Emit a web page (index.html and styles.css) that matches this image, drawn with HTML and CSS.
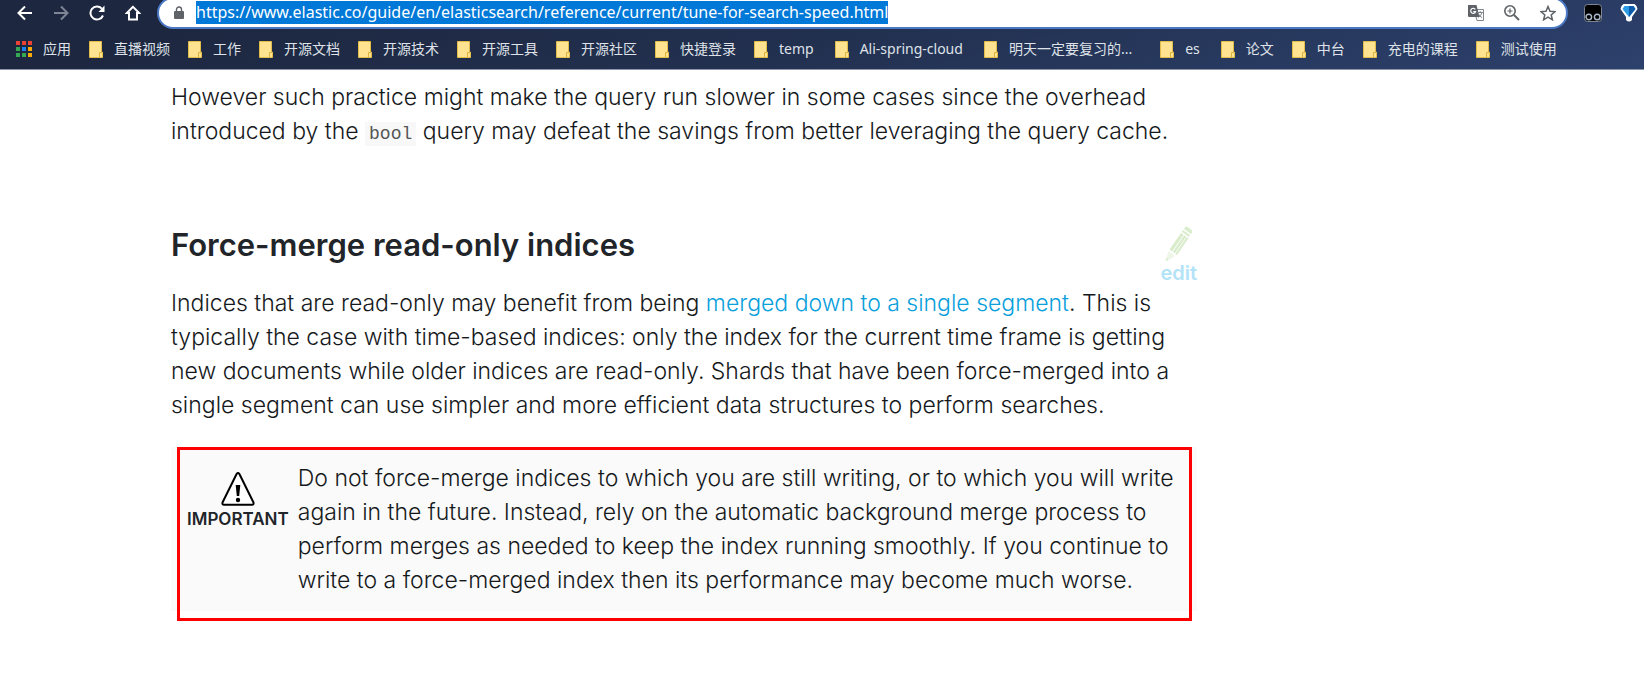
FILE: index.html
```html
<!DOCTYPE html>
<html lang="en">
<head>
    <meta charset="UTF-8">
    <meta name="viewport" content="width=device-width, initial-scale=1.0">
    <title>Tune for search speed | Elasticsearch Guide</title>
    <link rel="stylesheet" href="styles.css">
</head>
<body>
    <svg class="symbols" aria-hidden="true">
        <symbol id="folder" viewBox="0 0 14 17">
            <path d="M.5.5h12v10.500h1v5.500H.5z" fill="#ffe391" stroke="#e3bd4a"/>
            <path d="M10.500 16v-4.500h2.500" fill="none" stroke="#dcb23c"/>
        </symbol>
    </svg>
    <header class="browser">
        <div class="toolbar">
            <nav class="nav-buttons">
                <button type="button" aria-label="Back"><svg width="16" height="16" viewBox="0 0 16 16"><path d="M15 8H2M8 1.500L1.500 8 8 14.500" fill="none" stroke="#fff" stroke-width="2"/></svg></button>
                <button type="button" aria-label="Forward"><svg width="16" height="16" viewBox="0 0 16 16"><path d="M1 8h13M8 1.500L14.500 8 8 14.500" fill="none" stroke="#7e8594" stroke-width="2"/></svg></button>
                <button type="button" aria-label="Reload"><svg width="16" height="16" viewBox="0 0 16 16"><path d="M14 10.500A6.500 6.500 0 1 1 12.800 3.600" fill="none" stroke="#fff" stroke-width="2"/><path d="M15.500.5V7H9.500z" fill="#fff"/></svg></button>
                <button type="button" aria-label="Home"><svg width="16" height="16" viewBox="0 0 16 16"><path d="M8 1.800L1.800 8H4v6.500h8V8h2.200z" fill="none" stroke="#fff" stroke-width="2"/></svg></button>
            </nav>
            <div class="address-bar">
                <svg class="lock" width="10" height="14" viewBox="0 0 10 14"><rect y="5" width="10" height="8" rx="1" fill="#5f6368"/><path d="M2.500 5.500V3.500a2.500 2.500 0 0 1 5 0v2" fill="none" stroke="#5f6368" stroke-width="1.400"/></svg>
                <input class="url" type="text" aria-label="Address" value="https://www.elastic.co/guide/en/elasticsearch/reference/current/tune-for-search-speed.html">
                <div class="page-actions">
                    <button type="button" aria-label="Translate"><svg width="16" height="16" viewBox="0 0 16 16"><path d="M6 4.500h9.500v11H9z" fill="#fff" stroke="#80868b"/><path d="M0 0h8.500l3 12H1.200Q0 12 0 10.800z" fill="#5f6368"/><path d="M7.300 4.400A2.500 2.500 0 1 0 7.600 6.500H5.300" fill="none" stroke="#fff" stroke-width="1.200"/><path d="M9.500 7.500H15M12.200 6v1.500M14 7.500q-.8 3-3.500 5M10.500 9q1 2.500 3.500 3.500" fill="none" stroke="#80868b"/></svg></button>
                    <button type="button" aria-label="Zoom"><svg width="16" height="16" viewBox="0 0 16 16"><circle cx="6" cy="6" r="5.200" fill="none" stroke="#5f6368" stroke-width="1.600"/><path d="M10 10l5 5" stroke="#5f6368" stroke-width="2"/><path d="M3.500 6h5M6 3.500v5" stroke="#5f6368" stroke-width="1.200"/></svg></button>
                    <button type="button" aria-label="Bookmark this page"><svg width="16" height="16" viewBox="0 0 16 16"><path d="M8 1.500l2 4.700 5 .4-3.800 3.300 1.200 4.900L8 12.200l-4.400 2.600 1.200-4.900L1 6.600l5-.4z" fill="none" stroke="#5f6368" stroke-width="1.500"/></svg></button>
                </div>
            </div>
            <div class="extensions">
                <button type="button" aria-label="Tampermonkey"><svg width="18" height="18" viewBox="0 0 18 18"><rect x=".5" y=".5" width="17" height="17" rx="3" fill="#000" stroke="#7d8493"/><g fill="#000" stroke="#a9b6c9" stroke-width="1.400"><circle cx="4.800" cy="13" r="2.800"/><circle cx="13.200" cy="13" r="2.800"/></g></svg></button>
                <button type="button" aria-label="Proxy"><svg width="18" height="18" viewBox="0 0 18 18"><path d="M3.500 0h11q3 2 3 5L12 13v3q-3 3-6 0v-3L.5 5q0-3 3-5z" fill="#fff"/><path d="M4.500 2h9L15.500 5 9 13 2.500 5z" fill="#2b9be8"/><path d="M9 2h4.500l2 3L9 13z" fill="#0d5cab"/></svg></button>
            </div>
        </div>
        <nav class="bookmarks">
            <a class="apps" href="#"><svg width="16" height="16" viewBox="0 0 16 16"><path d="M0 0h4v4H0zM6 0h4v4H6zM12 0h4v4h-4z" fill="#ea4335"/><path d="M0 6h4v4H0zM0 12h4v4H0zM6 12h4v4H6z" fill="#34a853"/><path d="M6 6h4v4H6z" fill="#1a83f0"/><path d="M12 6h4v4h-4zM12 12h4v4h-4z" fill="#fbab05"/></svg><span>应用</span></a>
            <a href="#"><svg class="folder"><use href="#folder"/></svg><span>直播视频</span></a>
            <a href="#"><svg class="folder"><use href="#folder"/></svg><span>工作</span></a>
            <a href="#"><svg class="folder"><use href="#folder"/></svg><span>开源文档</span></a>
            <a href="#"><svg class="folder"><use href="#folder"/></svg><span>开源技术</span></a>
            <a href="#"><svg class="folder"><use href="#folder"/></svg><span>开源工具</span></a>
            <a href="#"><svg class="folder"><use href="#folder"/></svg><span>开源社区</span></a>
            <a href="#"><svg class="folder"><use href="#folder"/></svg><span>快捷登录</span></a>
            <a class="latin" href="#"><svg class="folder"><use href="#folder"/></svg><span>temp</span></a>
            <a class="latin" href="#"><svg class="folder"><use href="#folder"/></svg><span>Ali-spring-cloud</span></a>
            <a class="long" href="#"><svg class="folder"><use href="#folder"/></svg><span>明天一定要复习的...</span></a>
            <a class="latin" href="#"><svg class="folder"><use href="#folder"/></svg><span>es</span></a>
            <a href="#"><svg class="folder"><use href="#folder"/></svg><span>论文</span></a>
            <a href="#"><svg class="folder"><use href="#folder"/></svg><span>中台</span></a>
            <a href="#"><svg class="folder"><use href="#folder"/></svg><span>充电的课程</span></a>
            <a href="#"><svg class="folder"><use href="#folder"/></svg><span>测试使用</span></a>
        </nav>
    </header>

    <main class="guide">
        <p>However such practice might make the query run slower in some cases since the overhead introduced by the <code>bool</code> query may defeat the savings from better leveraging the query cache.</p>

        <div class="section-title">
            <h2>Force-merge read-only indices</h2>
            <a class="edit" href="#">
                <svg width="28" height="36" viewBox="0 0 28 36"><g fill="#d9eccb"><path d="M20 1.500q1-1.500 2.500-.5l4 3q1.500 1 .5 2.500l-1 1.500-7-5z"/><path d="M18 4l7 5-1.200 1.700-7-5z"/><path d="M16 7l2.600 1.800L7 25.400l-2.500-1.900zM19.200 9.200l2 1.500L9.800 27.200l-2-1.500zM21.800 11.100l1.700 1.200L12 29l-1.700-1.300z"/><path d="M3.500 25L10 30l-8 5q-1.500.5-1-1z" fill="#eef6e8"/><path d="M1.500 31.500l2 2-3 1.500z"/></g></svg>
                <span>edit</span>
            </a>
        </div>

        <p>Indices that are read-only may benefit from being <a href="#">merged down to a single segment</a>. This is typically the case with time-based indices: only the index for the current time frame is getting new documents while older indices are read-only. Shards that have been force-merged into a single segment can use simpler and more efficient data structures to perform searches.</p>

        <div class="important">
            <div class="icon">
                <svg width="34" height="34" viewBox="0 0 34 34"><path d="M15.600 2Q17 .2 18.400 2L32.500 30.500Q33 32.800 31 32.800H3Q1 32.800 1.500 30.500z" fill="#fff" stroke="#000" stroke-width="2" stroke-linejoin="round"/><path d="M14.700 13h4.600l-1.100 11h-2.400z"/><circle cx="17" cy="28" r="2.200"/></svg>
                <strong>IMPORTANT</strong>
            </div>
            <p>Do not force-merge indices to which you are still writing, or to which you will write again in the future. Instead, rely on the automatic background merge process to perform merges as needed to keep the index running smoothly. If you continue to write to a force-merged index then its performance may become much worse.</p>
        </div>
    </main>
</body>
</html>
```
FILE: styles.css
```css
body {
    margin: 0;
    background: #fff;
    color: #16191c;
    font-family: Inter, sans-serif;
    font-size: 23px;
    font-weight: 300;
    line-height: 34px;
}
a {
    color: #0aa0dc;
    text-decoration: none;
}
button {
    display: flex;
    padding: 0;
    border: 0;
    background: none;
}
svg {
    flex: none;
}
.symbols {
    position: absolute;
    width: 0;
    height: 0;
}

/* browser bar */
.browser {
    height: 69px;
    overflow: hidden;
    background: linear-gradient(165deg, #1d2740 15%, #22304f 50%, #2d416d);
    border-bottom: 1px solid #8d96aa;
    font-weight: 400;
}
.toolbar {
    display: flex;
    align-items: center;
    height: 25px;
}
.nav-buttons {
    display: flex;
    gap: 20px;
    padding: 0 16px 0 17px;
}
.address-bar {
    display: flex;
    flex: 1;
    align-items: center;
    box-sizing: border-box;
    height: 32px;
    padding: 0 10px 0 15px;
    background: #fff;
    border: 2px solid #4a78c4;
    border-radius: 16px;
}
.url {
    field-sizing: content;
    margin-left: 12px;
    padding: 0;
    border: 0;
    background: #0078d7;
    color: #fff;
    font-family: "Noto Sans", sans-serif;
    font-size: 16px;
    line-height: 23px;
}
.page-actions {
    display: flex;
    gap: 20px;
    margin-left: auto;
}
.extensions {
    display: flex;
    gap: 18px;
    padding: 0 6px 0 16px;
}
.bookmarks {
    display: flex;
    gap: 18px;
    padding: 12px 16px 0;
}
.bookmarks a {
    display: flex;
    align-items: center;
    gap: 11px;
    color: #dfe2e8;
    font-family: "Noto Sans", "Noto Sans CJK SC", sans-serif;
    font-size: 14px;
    line-height: 24px;
    white-space: nowrap;
}
.bookmarks .latin {
    padding-right: 3px;
}
.bookmarks .long {
    padding-right: 10px;
}
.folder {
    width: 14px;
    height: 17px;
}

/* guide page */
.guide {
    max-width: 1026px;
    margin: 0 171px;
    padding: 10px 0 60px;
}
.guide p {
    margin: 0;
}
code {
    padding: 2px 4px;
    background: #f8f8f8;
    color: #555;
    font-family: "Liberation Mono", monospace;
    font-size: 18px;
    line-height: 20px;
}
.section-title {
    display: flex;
    justify-content: space-between;
    margin: 78px 0 2px;
}
h2 {
    margin: 0;
    color: #212529;
    font-size: 31px;
    font-weight: 600;
    line-height: 38px;
}
.edit {
    display: flex;
    flex-direction: column;
    align-items: center;
    color: #b3e3f7;
    font-size: 20px;
    font-weight: 600;
    line-height: 22px;
}
.important {
    position: relative;
    display: flex;
    gap: 9px;
    margin-top: 25px;
    padding: 14px 20px 14px 16px;
    background: #fafafa;
}
/* red frame sits on top of the note and a little below it */
.important::after {
    content: "";
    position: absolute;
    inset: 0 5px -10px 6px;
    border: 3px solid #f00;
}
.icon {
    display: flex;
    flex-direction: column;
    align-items: center;
    padding-top: 11px;
}
.icon strong {
    color: #212529;
    font-size: 17px;
    font-weight: 600;
    line-height: 26px;
}
```
